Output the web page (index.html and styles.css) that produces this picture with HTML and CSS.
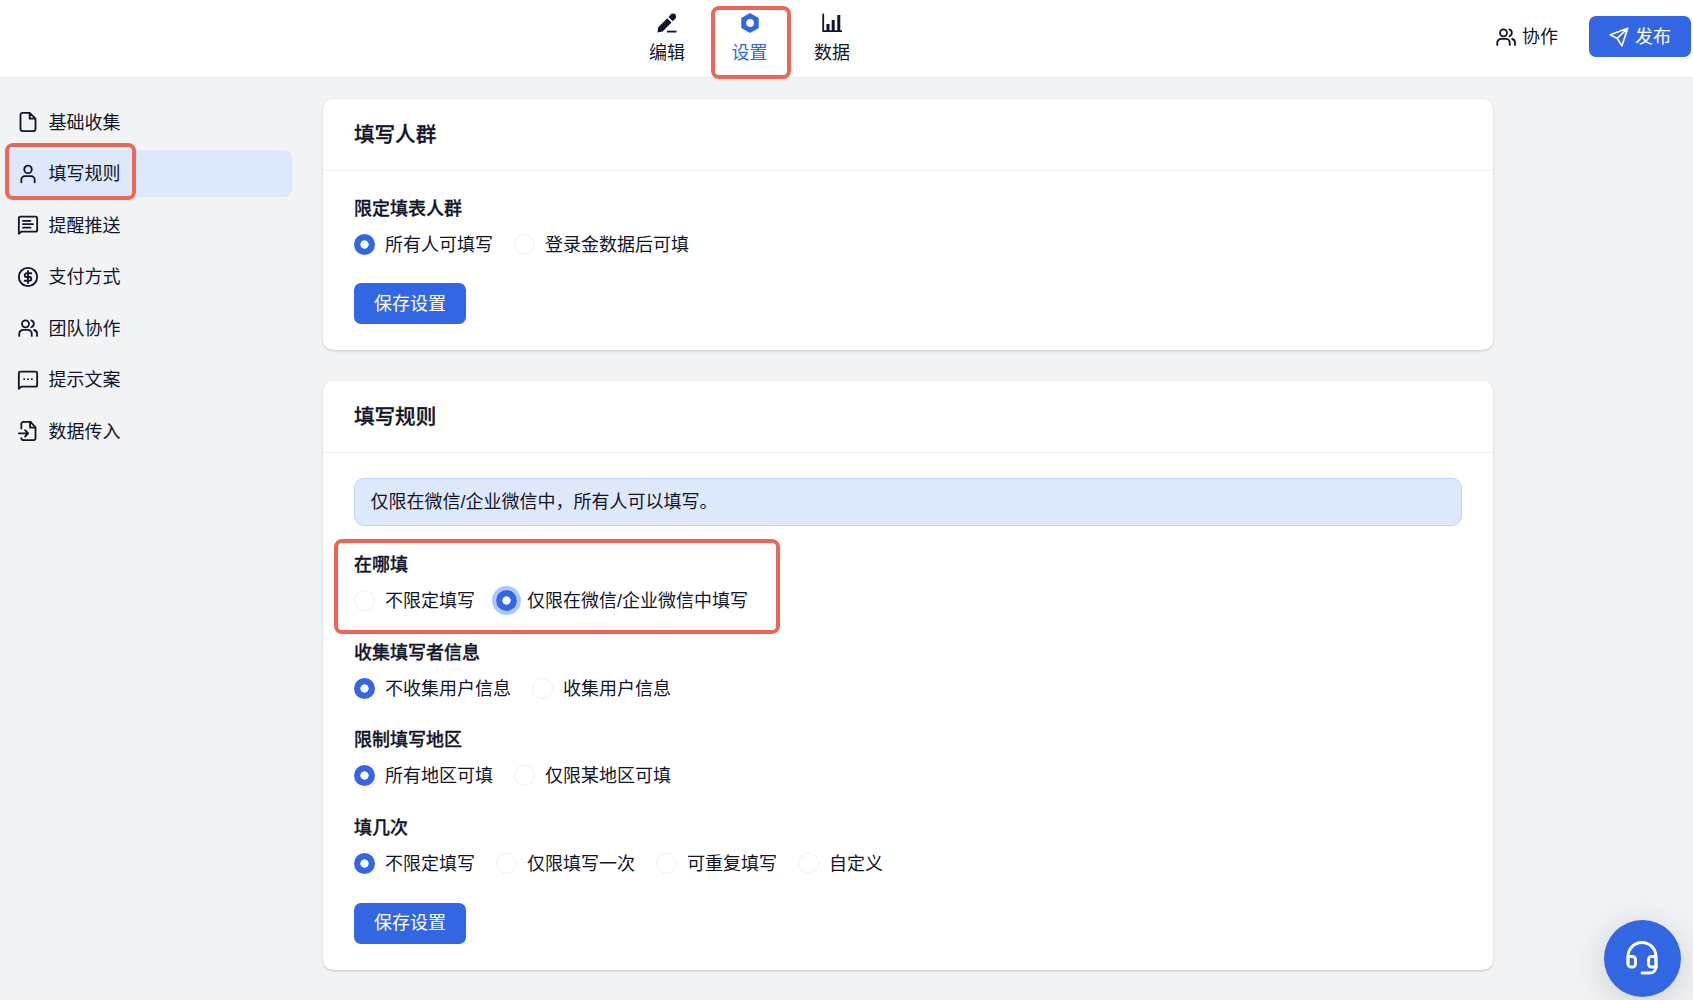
FILE: index.html
```
<!DOCTYPE html>
<html lang="zh-CN">
<head>
<meta charset="utf-8">
<title>表单设置</title>
<link rel="stylesheet" href="styles.css">
</head>
<body>
<svg class="sprite" aria-hidden="true">
  <symbol id="users" viewBox="0 0 24 24"><circle cx="9" cy="7" r="4.2"/><path d="M1.5 21.5v-2.5a4.8 4.8 0 0 1 4.8-4.8h5.4a4.8 4.8 0 0 1 4.8 4.8v2.5M16 2.9a4.3 4.3 0 0 1 0 8.2M22.8 21.5v-2.8a4.6 4.6 0 0 0-3.4-4.3"/></symbol>
</svg>
<header class="topbar">
  <nav class="tabs">
    <a class="tab">
      <svg class="tab-icon" viewBox="0 0 20 20"><path d="M0.4 19.4l.9-5.2L10.200 5.300l4.300 4.300-8.900 8.900z M11.500 4l1.600-1.700 4.300 4.300-1.600 1.700z" fill="currentColor"/><circle cx="16" cy="3.600" r="3.100" fill="currentColor"/><path d="M10 18.600h9.500" stroke="currentColor" stroke-width="1.800"/></svg>
      <span>编辑</span>
    </a>
    <a class="tab tab-active">
      <svg class="tab-icon" viewBox="0 0 20 20"><path fill-rule="evenodd" stroke="currentColor" stroke-width="1.500" stroke-linejoin="round" fill="currentColor" d="M10 1l8 4.500v9L10 19l-8-4.500v-9zM10 5.300a4.700 4.700 0 1 0 0 9.400a4.700 4.700 0 0 0 0-9.400z"/></svg>
      <span>设置</span>
      <i class="callout callout-tab"></i>
    </a>
    <a class="tab">
      <svg class="tab-icon" viewBox="0 0 20 20" fill="none" stroke="currentColor"><path d="M1.200 1.500v16.700h18.300" stroke-width="1.800" stroke-linecap="round"/><path d="M6 11v7M11.200 7v11M16.800 2v16" stroke-width="3"/></svg>
      <span>数据</span>
    </a>
  </nav>
  <div class="actions">
    <a class="collab"><svg class="icon"><use href="#users"/></svg><span>协作</span></a>
    <button class="btn publish"><svg class="icon" viewBox="0 0 24 24"><path d="M22.500 1.500L1.500 9.200l8.300 4.500 5.700 8.800zM22.500 1.500L9.800 13.700"/></svg><span>发布</span></button>
  </div>
</header>
<div class="layout">
  <aside class="sidebar">
    <a class="side-item"><svg class="icon" viewBox="0 0 24 24"><path d="M14 1H5.500a2.500 2.500 0 0 0-2.500 2.500v17a2.500 2.500 0 0 0 2.500 2.500h13a2.500 2.500 0 0 0 2.500-2.500V8zM14 1v7h7"/></svg><span>基础收集</span></a>
    <a class="side-item side-active"><svg class="icon" viewBox="0 0 24 24"><circle cx="12" cy="6.500" r="4.500"/><path d="M4 22v-3a4.500 4.500 0 0 1 4.500-4.500h7A4.500 4.500 0 0 1 20 19v3"/></svg><span>填写规则</span><i class="callout callout-side"></i></a>
    <a class="side-item"><svg class="icon" viewBox="0 0 24 24"><path d="M1 22.500V4a2 2 0 0 1 2-2h18a2 2 0 0 1 2 2v14a2 2 0 0 1-2 2H4zM6 7h9M6 11h12M6 15.200h9"/></svg><span>提醒推送</span></a>
    <a class="side-item"><svg class="icon" viewBox="0 0 24 24"><circle cx="12" cy="12" r="11"/><path d="M12 4.700v14.600M16 7.500h-5.700a2.250 2.250 0 0 0 0 4.500h3.400a2.250 2.250 0 0 1 0 4.500H8"/></svg><span>支付方式</span></a>
    <a class="side-item"><svg class="icon"><use href="#users"/></svg><span>团队协作</span></a>
    <a class="side-item"><svg class="icon" viewBox="0 0 24 24"><path d="M1 22.500V4a2 2 0 0 1 2-2h18a2 2 0 0 1 2 2v14a2 2 0 0 1-2 2H4z"/><path d="M7.400 11h.1M12 11h.1M16.600 11h.1"/></svg><span>提示文案</span></a>
    <a class="side-item"><svg class="icon" viewBox="0 0 24 24"><path d="M4 9V3.500A2.500 2.500 0 0 1 6.500 1H15l6 6.500v13a2.500 2.500 0 0 1-2.500 2.500h-12A2.500 2.500 0 0 1 4 20.500M14.500 1v7H21M1 14.800h11M8.500 11l3.700 3.800-3.700 3.800"/></svg><span>数据传入</span></a>
  </aside>
  <main class="content">
    <section class="card">
      <h2 class="card-title">填写人群</h2>
      <div class="card-body">
        <div class="field">
          <h3 class="label">限定填表人群</h3>
          <div class="options">
            <label class="option"><i class="radio checked"></i>所有人可填写</label>
            <label class="option"><i class="radio"></i>登录金数据后可填</label>
          </div>
        </div>
        <button class="btn save">保存设置</button>
      </div>
    </section>
    <section class="card">
      <h2 class="card-title">填写规则</h2>
      <div class="card-body rules">
        <p class="notice">仅限在微信/企业微信中，所有人可以填写。</p>
        <div class="field">
          <h3 class="label">在哪填</h3>
          <div class="options">
            <label class="option"><i class="radio"></i>不限定填写</label>
            <label class="option"><i class="radio checked focused"></i>仅限在微信/企业微信中填写</label>
          </div>
          <i class="callout callout-field"></i>
        </div>
        <div class="field">
          <h3 class="label">收集填写者信息</h3>
          <div class="options">
            <label class="option"><i class="radio checked"></i>不收集用户信息</label>
            <label class="option"><i class="radio"></i>收集用户信息</label>
          </div>
        </div>
        <div class="field">
          <h3 class="label">限制填写地区</h3>
          <div class="options">
            <label class="option"><i class="radio checked"></i>所有地区可填</label>
            <label class="option"><i class="radio"></i>仅限某地区可填</label>
          </div>
        </div>
        <div class="field">
          <h3 class="label">填几次</h3>
          <div class="options">
            <label class="option"><i class="radio checked"></i>不限定填写</label>
            <label class="option"><i class="radio"></i>仅限填写一次</label>
            <label class="option"><i class="radio"></i>可重复填写</label>
            <label class="option"><i class="radio"></i>自定义</label>
          </div>
        </div>
        <button class="btn save">保存设置</button>
      </div>
    </section>
  </main>
</div>
<button class="support" aria-label="客服">
  <svg viewBox="0 0 32 34" fill="none" stroke="#fff" stroke-width="2.900" stroke-linecap="round" stroke-linejoin="round"><path d="M2 23V15.500a14 14 0 0 1 28 0V26a6 6 0 0 1-6 6h-8"/><path d="M2 15.500h4.500a3 3 0 0 1 3 3v4.500a3 3 0 0 1-3 3H5a3 3 0 0 1-3-3zM30 15.500h-4.500a3 3 0 0 0-3 3v4.500a3 3 0 0 0 3 3H30z"/></svg>
</button>
</body>
</html>
```

FILE: styles.css
```
* { box-sizing: border-box; }
body {
  margin: 0;
  height: 1000px;
  overflow: hidden;
  background: #f2f3f5;
  color: #12152a;
  font: 18px/26px "Liberation Sans", "Noto Sans CJK SC", sans-serif;
}
h2, h3, p { margin: 0; }
.sprite { display: none; }
.icon {
  width: 20px;
  height: 20px;
  flex: none;
  overflow: visible;
  fill: none;
  stroke: currentColor;
  stroke-width: 2.200;
  stroke-linecap: round;
  stroke-linejoin: round;
}

.topbar {
  height: 78px;
  padding: 0 2px 0 649px;
  display: flex;
  justify-content: space-between;
  background: #fff;
  border-bottom: 1px solid #e8e9ec;
}
.tabs { display: flex; gap: 46.500px; padding-top: 13px; }
.tab {
  position: relative;
  display: flex;
  flex-direction: column;
  align-items: center;
  gap: 7px;
  width: 36px;
  height: 60px;
}
.tab-icon { width: 20px; height: 20px; flex: none; }
.tab-active { color: #3366e2; }
.actions { display: flex; align-items: flex-start; padding-top: 16px; gap: 31px; }
.collab { display: flex; align-items: center; gap: 6px; height: 42px; }
.btn {
  display: flex;
  align-items: center;
  justify-content: center;
  border: 0;
  border-radius: 7px;
  background: #3366e2;
  color: #fff;
  font: inherit;
}
.publish { width: 102px; height: 41px; gap: 6px; }
.publish .icon { stroke-width: 2; }

.callout {
  position: absolute;
  border: 4px solid #ec6657;
  border-radius: 8px;
}
.callout-tab { left: -21px; top: -7px; width: 80px; height: 73px; }
.callout-side { left: -1px; top: -7px; width: 131px; height: 57px; }
.callout-field { left: -20px; top: -13.500px; width: 446px; height: 95px; }

.layout { display: flex; align-items: flex-start; }
.sidebar {
  width: 323px;
  padding: 21px 31px 0 6px;
  display: flex;
  flex-direction: column;
  gap: 5.100px;
}
.side-item {
  position: relative;
  display: flex;
  align-items: center;
  gap: 10.500px;
  height: 46.400px;
  padding-left: 12px;
  border-radius: 8px;
}
.side-item span { padding-top: 1px; }
.side-active { background: #dde8fa; }

.content { width: 1170px; padding-top: 21px; display: flex; flex-direction: column; gap: 31px; }
.card {
  background: #fff;
  border-radius: 10px;
  box-shadow: 0 1px 3px rgba(0, 0, 0, .12), 0 1px 2px rgba(0, 0, 0, .08);
}
.card-title {
  height: 72px;
  padding: 0 31px;
  border-bottom: 1px solid #f0f1f3;
  font-size: 20.570px;
  font-weight: 500;
  line-height: 72px;
  -webkit-text-stroke: .3px;
}
.card-body { padding: 25px 31px 26px; }
.card-body > .field:first-child { height: 87px; }
.notice {
  height: 48px;
  margin-bottom: 26px;
  padding: 0 15.500px;
  border: 1px solid #bcd6f7;
  border-radius: 10px;
  background: #dde8fa;
  line-height: 47px;
}
.field { position: relative; height: 87.700px; }
.label { height: 26px; margin-bottom: 10px; font-size: 18px; font-weight: 500; -webkit-text-stroke: .3px; }
.options { display: flex; gap: 21px; height: 26px; }
.option { display: flex; align-items: center; gap: 10px; white-space: nowrap; }
.radio {
  width: 21px;
  height: 21px;
  margin-top: -1px;
  border: 1px solid #eeeff1;
  border-radius: 50%;
  background: #fff;
}
.checked {
  border: 0;
  background: radial-gradient(circle, #fff 3.800px, #3366e2 4.500px);
}
.focused { box-shadow: 0 0 0 4px #a9c9f8; }
.save { width: 112px; height: 41px; }

.support {
  position: fixed;
  left: 1603.500px;
  top: 919.500px;
  width: 77.500px;
  height: 77.500px;
  display: grid;
  place-items: center;
  border: 0;
  border-radius: 50%;
  background: #3366e2;
  box-shadow: 0 6px 36px rgba(0, 0, 0, .16);
}
.support svg { width: 32px; height: 34px; }
```
